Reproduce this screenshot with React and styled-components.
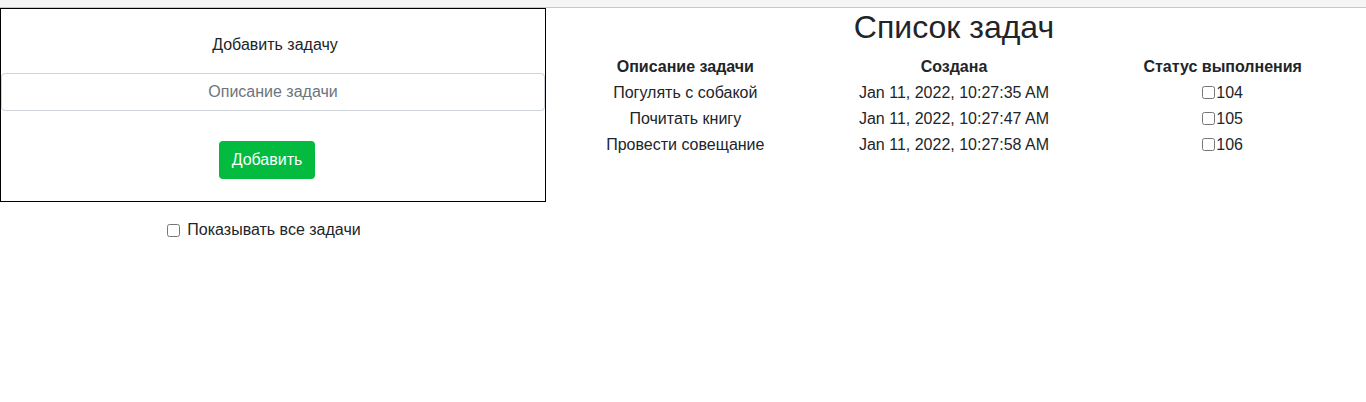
import React, { useState } from 'react'
import styled, { createGlobalStyle } from 'styled-components'

const GlobalStyle = createGlobalStyle`
  body {
    margin: 0;
    font-family: "Liberation Sans", Arial, sans-serif;
    font-size: 16px;
    color: #212529;
    background: #fff;
  }
`

const TopStrip = styled.div`
  height: 7px;
  background: #f5f5f5;
  border-bottom: 1px solid #c8c8c8;
`

const Page = styled.div`
  display: flex;
  align-items: flex-start;
`

const LeftCol = styled.div`
  width: 546px;
  flex: none;
`

const FormBox = styled.div`
  border: 1px solid #000;
  padding: 24px 0 22px;
  display: flex;
  flex-direction: column;
  align-items: center;
`

const FormTitle = styled.div`
  line-height: 24px;
  margin-bottom: 16px;
  padding-left: 4px;
`

const TaskInput = styled.input`
  box-sizing: border-box;
  width: 100%;
  height: 38px;
  border: 1px solid #ced4da;
  border-radius: 4px;
  font-family: inherit;
  font-size: 16px;
  text-align: center;
  color: #212529;
  outline: none;
  &::placeholder {
    color: #6c757d;
  }
`

const AddButton = styled.button`
  margin-top: 30px;
  margin-right: 12px;
  height: 38px;
  padding: 0 13px;
  border: none;
  border-radius: 4px;
  background: #02bb3f;
  color: #fff;
  font-family: inherit;
  font-size: 16px;
`

const ShowAll = styled.label`
  display: flex;
  align-items: center;
  justify-content: center;
  gap: 7px;
  margin-top: 16px;
  padding-right: 18px;
  line-height: 24px;
  input {
    margin: 0;
    width: 13px;
    height: 13px;
  }
`

const RightCol = styled.div`
  flex: 1;
  padding: 0 9px 0 5px;
`

const Title = styled.h1`
  margin: 0;
  font-size: 32px;
  font-weight: 400;
  line-height: 38px;
  text-align: center;
`

const Table = styled.table`
  width: 100%;
  margin-top: 8px;
  border-collapse: collapse;
  table-layout: fixed;
  th, td {
    padding: 1px 0;
    line-height: 24px;
    text-align: center;
    font-size: 16px;
  }
  th {
    font-weight: 700;
  }
`

const StatusCell = styled.td`
  input {
    margin: 0 1px 0 0;
    width: 13px;
    height: 13px;
    vertical-align: -1px;
  }
`

const tasks = [
  { id: 104, text: 'Погулять с собакой', created: 'Jan 11, 2022, 10:27:35 AM' },
  { id: 105, text: 'Почитать книгу', created: 'Jan 11, 2022, 10:27:47 AM' },
  { id: 106, text: 'Провести совещание', created: 'Jan 11, 2022, 10:27:58 AM' },
]

export default function App() {
  const [value, setValue] = useState('')

  return (
    <>
      <GlobalStyle />
      <TopStrip />
      <Page>
        <LeftCol>
          <FormBox>
            <FormTitle>Добавить задачу</FormTitle>
            <TaskInput
              placeholder="Описание задачи"
              value={value}
              onChange={e => setValue(e.target.value)}
            />
            <AddButton>Добавить</AddButton>
          </FormBox>
          <ShowAll>
            <input type="checkbox" />
            Показывать все задачи
          </ShowAll>
        </LeftCol>
        <RightCol>
          <Title>Список задач</Title>
          <Table>
            <thead>
              <tr>
                <th>Описание задачи</th>
                <th>Создана</th>
                <th>Статус выполнения</th>
              </tr>
            </thead>
            <tbody>
              {tasks.map(t => (
                <tr key={t.id}>
                  <td>{t.text}</td>
                  <td>{t.created}</td>
                  <StatusCell>
                    <input type="checkbox" />
                    {t.id}
                  </StatusCell>
                </tr>
              ))}
            </tbody>
          </Table>
        </RightCol>
      </Page>
    </>
  )
}
